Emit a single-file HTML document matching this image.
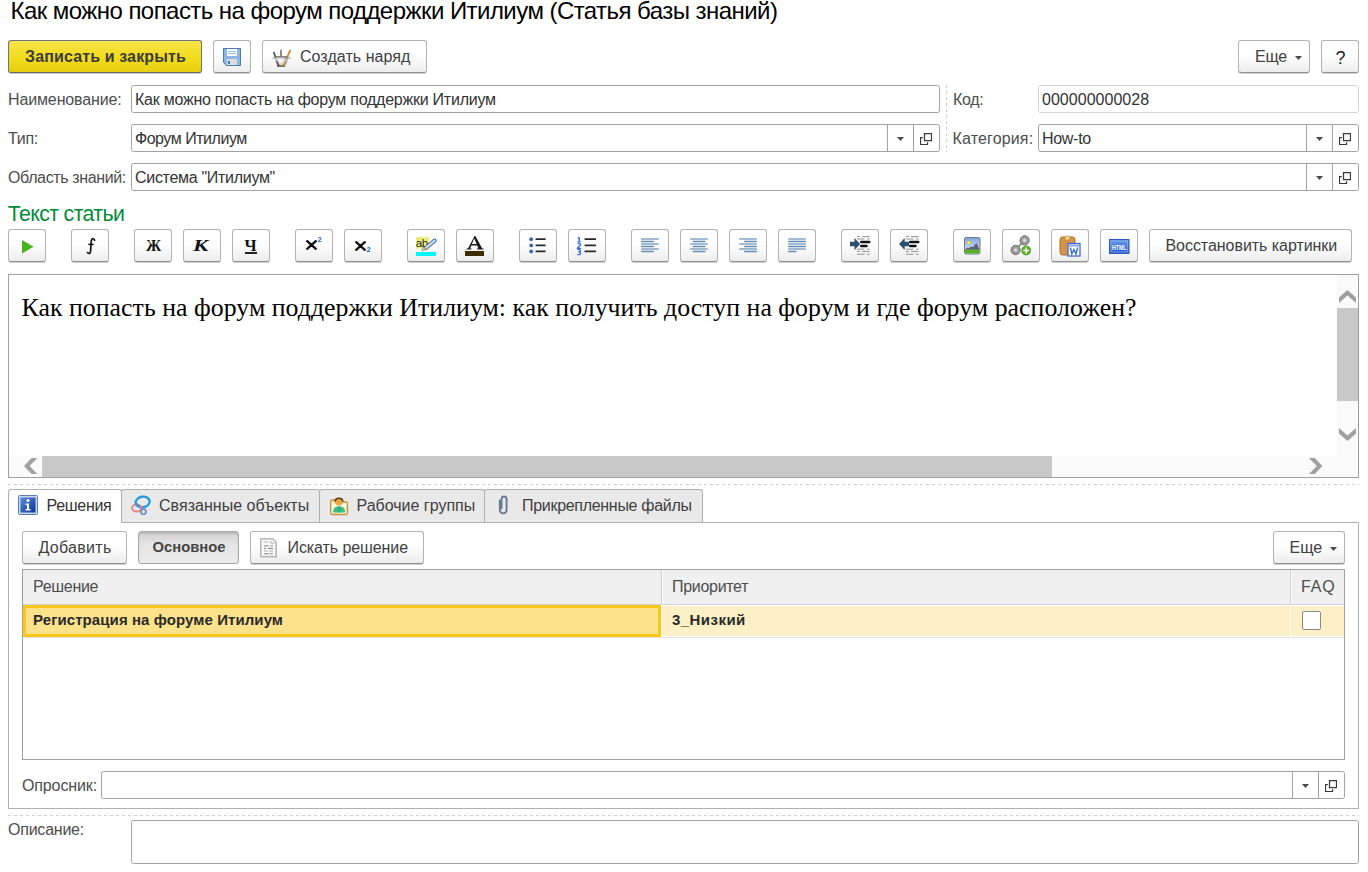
<!DOCTYPE html><html><head><meta charset="utf-8"><style>
html,body{margin:0;padding:0;background:#fff;width:1368px;height:872px;overflow:hidden;position:relative}
.a{position:absolute}
.t{position:absolute;line-height:1;white-space:pre;font-family:"Liberation Sans",sans-serif}
.btn{position:absolute;box-sizing:border-box;border:1px solid #b4b4b4;border-bottom-color:#909090;border-radius:3px;background:linear-gradient(#ffffff 0%,#fefefe 45%,#ededed 100%);box-shadow:0 1px 0 rgba(0,0,0,0.18)}
.inp{position:absolute;box-sizing:border-box;border:1px solid #a2a2a2;border-radius:2.5px;background:#fff}
</style></head><body>
<div class="t" style="left:10.5px;top:-1.32px;font-size:24px;color:#000;font-weight:normal;font-family:'Liberation Sans', sans-serif;letter-spacing:-0.55px;">Как можно попасть на форум поддержки Итилиум (Статья базы знаний)</div>
<div class="a" style="left:8px;top:40px;width:194px;height:33px;box-sizing:border-box;border:1px solid #72727e;border-bottom-color:#66666f;border-radius:3px;background:linear-gradient(#f7e44a,#f2dc1a 55%,#e6cf10);box-shadow:0 1px 0 rgba(0,0,0,0.2)"></div>
<div class="t" style="left:25px;top:48.96px;font-size:16px;color:#3c3c3c;font-weight:bold;font-family:'Liberation Sans', sans-serif;letter-spacing:0.13px;">Записать и закрыть</div>
<div class="btn" style="left:213px;top:40px;width:38px;height:33px;"></div>
<svg class="a" style="left:223px;top:48px" width="18" height="18" viewBox="0 0 18 18"><path d="M0.5 0.5H17.5V17.5H3.5L0.5 14.5Z" fill="#8db6e3" stroke="#4a79b3"/>
<rect x="4" y="1" width="10" height="7" fill="#fff"/>
<rect x="5" y="3" width="8" height="0.9" fill="#8db6e3"/><rect x="5" y="5" width="8" height="0.9" fill="#8db6e3"/>
<rect x="4" y="11" width="10" height="6" fill="#d9e0dc"/><rect x="5" y="13" width="2" height="3" fill="#4a79b3"/></svg>
<div class="btn" style="left:262px;top:40px;width:165px;height:33px;"></div>
<svg class="a" style="left:271px;top:47px" width="21" height="21" viewBox="0 0 21 21"><defs><radialGradient id="cup" cx="0.45" cy="0.4" r="0.6"><stop offset="0" stop-color="#ffffff"/><stop offset="0.6" stop-color="#d0d0d0"/><stop offset="1" stop-color="#8a8a8a"/></radialGradient><linearGradient id="pcl" x1="0" y1="0" x2="1" y2="0"><stop offset="0" stop-color="#f0b840"/><stop offset="1" stop-color="#c07810"/></linearGradient></defs><path d="M0.5 11.5L4 9.5L5 12Z M20.5 11.5L17 9.5L16 12Z" fill="#b8b8b8"/><path d="M10 1.5L11 4V9.5H9V4Z" fill="#8a8a8a"/><path d="M1.8 5.2L3.4 4.6L8.6 18.8L7 19.4Z" fill="#5a5a5a"/><path d="M18.6 2.4L20.2 3.2L13.2 19.4L11.4 18.8Z" fill="url(#pcl)"/><path d="M4.2 9.8H16.2C17.2 14.5 15.6 19 10.2 19.8C4.8 19 3.2 14.5 4.2 9.8Z" fill="url(#cup)"/><path d="M4.2 9.8H16.2" stroke="#6a6a6a" stroke-width="1.1"/><path d="M5.2 14L6.2 13.6L8.6 18.8L7 19.4Z" fill="#4a4a4a"/><path d="M14.6 13.6L15.6 14L13.2 19.4L11.4 18.8Z" fill="#c88a20"/><path d="M6 19.2H14" stroke="#3a3020" stroke-width="1.2" opacity="0.7"/></svg>
<div class="t" style="left:300px;top:49.46px;font-size:16px;color:#404040;font-weight:normal;font-family:'Liberation Sans', sans-serif;letter-spacing:0.05px;">Создать наряд</div>
<div class="btn" style="left:1238px;top:40px;width:72px;height:33px;"></div>
<div class="t" style="left:1255px;top:49.46px;font-size:16px;color:#404040;font-weight:normal;font-family:'Liberation Sans', sans-serif;letter-spacing:-0.15px;">Еще</div>
<svg class="a" style="left:1295px;top:56px" width="7" height="4" viewBox="0 0 7 4"><path d="M0 0H7L3.5 4Z" fill="#4a4a4a"/></svg>
<div class="btn" style="left:1321px;top:40px;width:38px;height:33px;"></div>
<div class="t" style="left:1335.5px;top:49.26px;font-size:18px;color:#1a1a1a;font-weight:normal;font-family:'Liberation Sans', sans-serif;letter-spacing:0px;">?</div>
<div class="t" style="left:8px;top:92.46px;font-size:16px;color:#4d4d4d;font-weight:normal;font-family:'Liberation Sans', sans-serif;letter-spacing:-0.13px;">Наименование:</div>
<div class="inp" style="left:131px;top:85px;width:809px;height:28px;border-color:#a2a2a2"></div>
<div class="t" style="left:135px;top:92.46px;font-size:16px;color:#333;font-weight:normal;font-family:'Liberation Sans', sans-serif;letter-spacing:-0.24px;">Как можно попасть на форум поддержки Итилиум</div>
<div class="t" style="left:8px;top:131.46px;font-size:16px;color:#4d4d4d;font-weight:normal;font-family:'Liberation Sans', sans-serif;letter-spacing:-0.3px;">Тип:</div>
<div class="inp" style="left:131px;top:124px;width:809px;height:28px;border-color:#a2a2a2"></div>
<div class="a" style="left:887px;top:125px;width:1px;height:26px;background:#a2a2a2"></div>
<div class="a" style="left:913px;top:125px;width:1px;height:26px;background:#a2a2a2"></div>
<svg class="a" style="left:897px;top:137px" width="7" height="4" viewBox="0 0 7 4"><path d="M0 0H7L3.5 4Z" fill="#4a4a4a"/></svg>
<svg class="a" style="left:920px;top:133px" width="12" height="12" viewBox="0 0 12 12"><path d="M4.5 0.5H11.5V7.5H4.5Z M2.8 4.5H0.5V11.5H7.5V9.2" fill="none" stroke="#3a3a3a" stroke-width="1.25"/></svg>
<div class="t" style="left:135px;top:131.46px;font-size:16px;color:#333;font-weight:normal;font-family:'Liberation Sans', sans-serif;letter-spacing:-0.47px;">Форум Итилиум</div>
<div class="t" style="left:8px;top:170.46px;font-size:16px;color:#4d4d4d;font-weight:normal;font-family:'Liberation Sans', sans-serif;letter-spacing:-0.37px;">Область знаний:</div>
<div class="inp" style="left:131px;top:163px;width:1228px;height:28px;border-color:#a2a2a2"></div>
<div class="a" style="left:1306px;top:164px;width:1px;height:26px;background:#a2a2a2"></div>
<div class="a" style="left:1332px;top:164px;width:1px;height:26px;background:#a2a2a2"></div>
<svg class="a" style="left:1316px;top:176px" width="7" height="4" viewBox="0 0 7 4"><path d="M0 0H7L3.5 4Z" fill="#4a4a4a"/></svg>
<svg class="a" style="left:1339px;top:172px" width="12" height="12" viewBox="0 0 12 12"><path d="M4.5 0.5H11.5V7.5H4.5Z M2.8 4.5H0.5V11.5H7.5V9.2" fill="none" stroke="#3a3a3a" stroke-width="1.25"/></svg>
<div class="t" style="left:135px;top:170.46px;font-size:16px;color:#333;font-weight:normal;font-family:'Liberation Sans', sans-serif;letter-spacing:-0.3px;">Система "Итилиум"</div>
<div class="a" style="left:946px;top:85px;width:1px;height:67px;background:repeating-linear-gradient(#cccccc 0 3px,transparent 3px 6px)"></div>
<div class="t" style="left:953px;top:92.46px;font-size:16px;color:#4d4d4d;font-weight:normal;font-family:'Liberation Sans', sans-serif;letter-spacing:-0.3px;">Код:</div>
<div class="inp" style="left:1038px;top:85px;width:321px;height:28px;border-color:#d4d4d4"></div>
<div class="t" style="left:1042px;top:92.46px;font-size:16px;color:#333;font-weight:normal;font-family:'Liberation Sans', sans-serif;letter-spacing:0.03px;">000000000028</div>
<div class="t" style="left:952.5px;top:131.46px;font-size:16px;color:#4d4d4d;font-weight:normal;font-family:'Liberation Sans', sans-serif;letter-spacing:0.15px;">Категория:</div>
<div class="inp" style="left:1038px;top:124px;width:321px;height:28px;border-color:#a2a2a2"></div>
<div class="a" style="left:1306px;top:125px;width:1px;height:26px;background:#a2a2a2"></div>
<div class="a" style="left:1332px;top:125px;width:1px;height:26px;background:#a2a2a2"></div>
<svg class="a" style="left:1316px;top:137px" width="7" height="4" viewBox="0 0 7 4"><path d="M0 0H7L3.5 4Z" fill="#4a4a4a"/></svg>
<svg class="a" style="left:1339px;top:133px" width="12" height="12" viewBox="0 0 12 12"><path d="M4.5 0.5H11.5V7.5H4.5Z M2.8 4.5H0.5V11.5H7.5V9.2" fill="none" stroke="#3a3a3a" stroke-width="1.25"/></svg>
<div class="t" style="left:1042px;top:131.46px;font-size:16px;color:#333;font-weight:normal;font-family:'Liberation Sans', sans-serif;letter-spacing:-0.3px;">How-to</div>
<div class="t" style="left:7.8px;top:203.97px;font-size:21.3px;color:#008c38;font-weight:normal;font-family:'Liberation Sans', sans-serif;letter-spacing:-0.62px;">Текст статьи</div>
<div class="btn" style="left:8px;top:229px;width:38px;height:33px;"></div>
<div class="btn" style="left:71px;top:229px;width:38px;height:33px;"></div>
<div class="btn" style="left:134px;top:229px;width:38px;height:33px;"></div>
<div class="btn" style="left:183px;top:229px;width:38px;height:33px;"></div>
<div class="btn" style="left:232px;top:229px;width:38px;height:33px;"></div>
<div class="btn" style="left:295px;top:229px;width:38px;height:33px;"></div>
<div class="btn" style="left:344px;top:229px;width:38px;height:33px;"></div>
<div class="btn" style="left:407px;top:229px;width:38px;height:33px;"></div>
<div class="btn" style="left:456px;top:229px;width:38px;height:33px;"></div>
<div class="btn" style="left:519px;top:229px;width:38px;height:33px;"></div>
<div class="btn" style="left:568px;top:229px;width:38px;height:33px;"></div>
<div class="btn" style="left:631px;top:229px;width:38px;height:33px;"></div>
<div class="btn" style="left:680px;top:229px;width:38px;height:33px;"></div>
<div class="btn" style="left:729px;top:229px;width:38px;height:33px;"></div>
<div class="btn" style="left:778px;top:229px;width:38px;height:33px;"></div>
<div class="btn" style="left:841px;top:229px;width:38px;height:33px;"></div>
<div class="btn" style="left:890px;top:229px;width:38px;height:33px;"></div>
<div class="btn" style="left:953px;top:229px;width:38px;height:33px;"></div>
<div class="btn" style="left:1002px;top:229px;width:38px;height:33px;"></div>
<div class="btn" style="left:1051px;top:229px;width:38px;height:33px;"></div>
<div class="btn" style="left:1100px;top:229px;width:38px;height:33px;"></div>
<div class="btn" style="left:1149px;top:229px;width:203px;height:33px;"></div>
<div class="t" style="left:1165.5px;top:238.46px;font-size:16px;color:#404040;font-weight:normal;font-family:'Liberation Sans', sans-serif;letter-spacing:-0.05px;">Восстановить картинки</div>
<div class="a" style="left:8px;top:274px;width:1351px;height:204px;box-sizing:border-box;border:1px solid #a0a0a0;background:#fff"></div>
<div class="t" style="left:21.5px;top:295.39px;font-size:25.8px;color:#000;font-weight:normal;font-family:'Liberation Serif', serif;letter-spacing:0.04px;">Как попасть на форум поддержки Итилиум: как получить доступ на форум и где форум расположен?</div>
<div class="a" style="left:1337px;top:275px;width:21px;height:181px;background:#fafafa"></div>
<div class="a" style="left:1337px;top:308px;width:21px;height:93px;background:#c8c8c8"></div>
<svg class="a" style="left:1339px;top:290px" width="17" height="13" viewBox="0 0 17 13"><path d="M0 7.6L8.5 0L17 7.6V13L8.5 5.4L0 13Z" fill="#a0a0a0"/></svg>
<svg class="a" style="left:1339px;top:428px" width="17" height="13" viewBox="0 0 17 13"><path d="M0 0L8.5 7.6L17 0V5.4L8.5 13L0 5.4Z" fill="#a0a0a0"/></svg>
<div class="a" style="left:9px;top:456px;width:1349px;height:21px;background:#fafafa"></div>
<div class="a" style="left:42px;top:456px;width:1010px;height:21px;background:#c8c8c8"></div>
<svg class="a" style="left:24px;top:458px" width="14" height="16" viewBox="0 0 14 16"><path d="M7.6 0H13.4L5.6 8L13.4 16H7.6L0 8Z" fill="#a0a0a0"/></svg>
<svg class="a" style="left:1309px;top:458px" width="14" height="16" viewBox="0 0 14 16"><path d="M5.8 0H0L7.8 8L0 16H5.8L13.4 8Z" fill="#a0a0a0"/></svg>
<div class="a" style="left:8px;top:484px;width:1351px;height:1px;background:repeating-linear-gradient(90deg,#d0d0d0 0 3px,transparent 3px 6px)"></div>
<div class="a" style="left:8px;top:522px;width:1351px;height:1px;background:#b0b0b0"></div>
<div class="a" style="left:121px;top:489px;width:199px;height:33px;box-sizing:border-box;border:1px solid #b0b0b0;border-bottom:none;border-radius:3px 3px 0 0;background:#e9e9e9"></div>
<div class="a" style="left:319px;top:489px;width:166px;height:33px;box-sizing:border-box;border:1px solid #b0b0b0;border-bottom:none;border-radius:3px 3px 0 0;background:#e9e9e9"></div>
<div class="a" style="left:484px;top:489px;width:219px;height:33px;box-sizing:border-box;border:1px solid #b0b0b0;border-bottom:none;border-radius:3px 3px 0 0;background:#e9e9e9"></div>
<div class="a" style="left:8px;top:489px;width:114px;height:34px;box-sizing:border-box;border:1px solid #b0b0b0;border-bottom:none;border-radius:3px 3px 0 0;background:#fff"></div>
<div class="a" style="left:8px;top:522px;width:1351px;height:287px;box-sizing:border-box;border:1px solid #b0b0b0;border-top:none"></div>
<div class="a" style="left:9px;top:522px;width:112px;height:2px;background:#fff"></div>
<svg class="a" style="left:18px;top:495px" width="20" height="20" viewBox="0 0 20 20"><defs><linearGradient id="ig" x1="0" y1="0" x2="1" y2="1"><stop offset="0" stop-color="#5a8ad8"/><stop offset="1" stop-color="#0a3596"/></linearGradient></defs><rect x="0.5" y="0.5" width="19" height="19" rx="1" fill="#c8d6ea" stroke="#5a7fb8"/><rect x="2.5" y="2.5" width="15" height="15" fill="url(#ig)"/><circle cx="10" cy="5.5" r="1.6" fill="#fff"/><path d="M7.5 8.5H11V14H12.5V15.5H7.5V14H9V10H7.5Z" fill="#fff"/></svg>
<div class="t" style="left:46.5px;top:498.46px;font-size:16px;color:#333;font-weight:normal;font-family:'Liberation Sans', sans-serif;letter-spacing:-0.3px;">Решения</div>
<svg class="a" style="left:126px;top:490px" width="30" height="30" viewBox="0 0 30 30"><ellipse cx="10.7" cy="17.9" rx="4.7" ry="3.6" fill="none" stroke="#f27c7c" stroke-width="1.8"/><ellipse cx="16.7" cy="12" rx="7" ry="5.3" transform="rotate(-8 16.7 12)" fill="none" stroke="#2a9ae0" stroke-width="2.4"/><path d="M14.2 15.6A4.7 3.6 0 0 1 14.8 19" fill="none" stroke="#f27c7c" stroke-width="1.8"/><circle cx="17.4" cy="21.8" r="2.6" fill="#c8f0b8" stroke="#5a7acc" stroke-width="1.3"/></svg>
<div class="t" style="left:159px;top:498.46px;font-size:16px;color:#404040;font-weight:normal;font-family:'Liberation Sans', sans-serif;letter-spacing:0.03px;">Связанные объекты</div>
<svg class="a" style="left:324px;top:490px" width="30" height="30" viewBox="0 0 30 30"><path d="M6.6 11.2Q6.6 10 8 10H10.5L11.5 12H22Q23.5 12 23.5 13.5V23Q23.5 24.5 22 24.5H8Q6.6 24.5 6.6 23Z" fill="#f6e6a8" stroke="#c09448" stroke-width="1.3"/><rect x="8.2" y="13.2" width="13.8" height="10" fill="#fffbe2"/><path d="M9 22.6C9 18 11 16.2 15 16.2C19 16.2 21.2 18 21.2 22.6Z" fill="#3cbf86"/><path d="M15 16.2V22.6" stroke="#1e9a60" stroke-width="0.8"/><circle cx="15" cy="11.6" r="3.9" fill="#e9a443"/><path d="M11.2 11.6C11.2 7 18.8 7 18.8 11.6" fill="none" stroke="#5a3a18" stroke-width="1.5"/></svg>
<div class="t" style="left:356.5px;top:498.46px;font-size:16px;color:#404040;font-weight:normal;font-family:'Liberation Sans', sans-serif;letter-spacing:0.0px;">Рабочие группы</div>
<svg class="a" style="left:498px;top:495px" width="11" height="20" viewBox="0 0 11 20"><path d="M1.8 5.5V15A3.4 3.4 0 0 0 8.6 15V4A2.5 2.5 0 0 0 3.6 4V13.2" fill="none" stroke="#667a94" stroke-width="1.9" stroke-linecap="round"/></svg>
<div class="t" style="left:522px;top:498.46px;font-size:16px;color:#404040;font-weight:normal;font-family:'Liberation Sans', sans-serif;letter-spacing:-0.3px;">Прикрепленные файлы</div>
<div class="btn" style="left:22px;top:531px;width:105px;height:33px;"></div>
<div class="t" style="left:38.5px;top:540.46px;font-size:16px;color:#404040;font-weight:normal;font-family:'Liberation Sans', sans-serif;letter-spacing:0.3px;">Добавить</div>
<div class="a" style="left:138px;top:531px;width:101px;height:33px;box-sizing:border-box;border:1px solid #a8a8a8;border-radius:3px;background:linear-gradient(#d0d0d0,#e4e4e4 40%,#ececec);box-shadow:inset 0 2px 2px rgba(0,0,0,0.12)"></div>
<div class="t" style="left:152.5px;top:539.97px;font-size:14.8px;color:#454545;font-weight:bold;font-family:'Liberation Sans', sans-serif;letter-spacing:0px;">Основное</div>
<div class="btn" style="left:250px;top:531px;width:174px;height:33px;"></div>
<svg class="a" style="left:255px;top:533px" width="30" height="30" viewBox="0 0 30 30"><path d="M5.8 5.8H17.6L21.2 9.4V23.6H5.8Z" fill="#fff" stroke="#b6b6b6" stroke-width="1.6"/><path d="M15.8 7.5V10.2H19.4" fill="none" stroke="#b0b0b0" stroke-width="1"/><rect x="8.3" y="7.6" width="5.5" height="2.6" fill="#d6dbe2"/><rect x="8.8" y="12.2" width="5" height="1.3" fill="#9a9a9a"/><rect x="15" y="12.2" width="3" height="1.3" fill="#aaa"/><rect x="8.8" y="14.8" width="2" height="1.3" fill="#888"/><rect x="13" y="14.8" width="5" height="1.3" fill="#888"/><rect x="8.8" y="17.4" width="4" height="1.3" fill="#bbb"/><rect x="14" y="17.4" width="4" height="1.3" fill="#bbb"/><rect x="8.8" y="20" width="5" height="1.3" fill="#999"/><rect x="15" y="20" width="2.8" height="1.3" fill="#999"/></svg>
<div class="t" style="left:287.5px;top:540.46px;font-size:16px;color:#404040;font-weight:normal;font-family:'Liberation Sans', sans-serif;letter-spacing:-0.09px;">Искать решение</div>
<div class="btn" style="left:1273px;top:531px;width:72px;height:33px;"></div>
<div class="t" style="left:1289.5px;top:540.46px;font-size:16px;color:#404040;font-weight:normal;font-family:'Liberation Sans', sans-serif;letter-spacing:0px;">Еще</div>
<svg class="a" style="left:1330px;top:547px" width="7" height="4" viewBox="0 0 7 4"><path d="M0 0H7L3.5 4Z" fill="#4a4a4a"/></svg>
<div class="a" style="left:22px;top:569px;width:1323px;height:191px;box-sizing:border-box;border:1px solid #a0a0a0;background:#fff"></div>
<div class="a" style="left:23px;top:570px;width:1321px;height:34px;background:#f0f0f0"></div>
<div class="a" style="left:661px;top:570px;width:1px;height:34px;background:#cfcfcf"></div>
<div class="a" style="left:662px;top:570px;width:1px;height:34px;background:#ffffff"></div>
<div class="a" style="left:1290px;top:570px;width:1px;height:34px;background:#cfcfcf"></div>
<div class="a" style="left:1291px;top:570px;width:1px;height:34px;background:#ffffff"></div>
<div class="a" style="left:23px;top:604px;width:1321px;height:1px;background:#d2d2d6"></div>
<div class="t" style="left:33px;top:578.96px;font-size:16px;color:#4d4d4d;font-weight:normal;font-family:'Liberation Sans', sans-serif;letter-spacing:-0.3px;">Решение</div>
<div class="t" style="left:672px;top:578.96px;font-size:16px;color:#4d4d4d;font-weight:normal;font-family:'Liberation Sans', sans-serif;letter-spacing:-0.3px;">Приоритет</div>
<div class="t" style="left:1301px;top:578.96px;font-size:16px;color:#4d4d4d;font-weight:normal;font-family:'Liberation Sans', sans-serif;letter-spacing:0.8px;">FAQ</div>
<div class="a" style="left:662px;top:606px;width:682px;height:30px;background:#fdf0c6"></div>
<div class="a" style="left:1290px;top:605px;width:1px;height:32px;background:#fff"></div>
<div class="a" style="left:23px;top:605px;width:638px;height:32px;box-sizing:border-box;border:3px solid #f9c818;background:#fde28c"></div>
<div class="a" style="left:23px;top:637px;width:1321px;height:1px;background:#e2e2e2"></div>
<div class="t" style="left:33px;top:611.80px;font-size:15px;color:#2a2a2a;font-weight:bold;font-family:'Liberation Sans', sans-serif;letter-spacing:0.08px;">Регистрация на форуме Итилиум</div>
<div class="t" style="left:672px;top:611.80px;font-size:15px;color:#2a2a2a;font-weight:bold;font-family:'Liberation Sans', sans-serif;letter-spacing:0.45px;">3_Низкий</div>
<div class="a" style="left:1302px;top:611px;width:19px;height:19px;box-sizing:border-box;border:1px solid #8a8a8a;border-radius:2px;background:#fff"></div>
<div class="t" style="left:22px;top:778.46px;font-size:16px;color:#4d4d4d;font-weight:normal;font-family:'Liberation Sans', sans-serif;letter-spacing:-0.13px;">Опросник:</div>
<div class="inp" style="left:101px;top:771px;width:1244px;height:28px;border-color:#a2a2a2"></div>
<div class="a" style="left:1292px;top:772px;width:1px;height:26px;background:#a2a2a2"></div>
<div class="a" style="left:1318px;top:772px;width:1px;height:26px;background:#a2a2a2"></div>
<svg class="a" style="left:1302px;top:784px" width="7" height="4" viewBox="0 0 7 4"><path d="M0 0H7L3.5 4Z" fill="#4a4a4a"/></svg>
<svg class="a" style="left:1325px;top:780px" width="12" height="12" viewBox="0 0 12 12"><path d="M4.5 0.5H11.5V7.5H4.5Z M2.8 4.5H0.5V11.5H7.5V9.2" fill="none" stroke="#3a3a3a" stroke-width="1.25"/></svg>
<div class="a" style="left:8px;top:815px;width:1351px;height:1px;background:repeating-linear-gradient(90deg,#d0d0d0 0 3px,transparent 3px 6px)"></div>
<div class="t" style="left:8px;top:822.46px;font-size:16px;color:#4d4d4d;font-weight:normal;font-family:'Liberation Sans', sans-serif;letter-spacing:-0.23px;">Описание:</div>
<div class="inp" style="left:131px;top:820px;width:1228px;height:44px;border-color:#a2a2a2"></div>
<svg class="a" style="left:22px;top:240px" width="12" height="14" viewBox="0 0 12 14"><path d="M0 0V13.5L11.5 6.75Z" fill="#46b41c"/></svg>
<svg class="a" style="left:86px;top:237px" width="10" height="18" viewBox="0 0 10 18"><path d="M8.6 3.2C8.2 1.6 6.6 1.2 5.8 2.4C5.2 3.3 5.1 5 5 7L4.6 14C4.5 16.2 3.3 17 1.5 15.6" fill="none" stroke="#111" stroke-width="1.7" stroke-linecap="round"/><path d="M2.3 7.4H7.6" stroke="#111" stroke-width="1.5"/></svg>
<div class="t" style="left:145.5px;top:238.18px;font-size:16.5px;color:#111;font-weight:bold;font-family:'Liberation Serif', serif;letter-spacing:0px;transform:scaleX(0.93);transform-origin:0 0">Ж</div>
<div class="t" style="left:193px;top:238.18px;font-size:16.5px;color:#111;font-weight:bold;font-family:'Liberation Serif', serif;letter-spacing:0px;font-style:italic;transform:scaleX(1.38);transform-origin:0 0">К</div>
<div class="t" style="left:244.5px;top:238.18px;font-size:16.5px;color:#111;font-weight:bold;font-family:'Liberation Serif', serif;letter-spacing:0px;">Ч</div>
<div class="a" style="left:245px;top:252px;width:12px;height:2px;background:#222"></div>
<svg class="a" style="left:306px;top:240px" width="11" height="10" viewBox="0 0 11 10"><path d="M1.2 1.2L9.8 8.8M9.8 1.2L1.2 8.8" stroke="#111" stroke-width="2.3" stroke-linecap="round"/></svg>
<div class="t" style="left:317.5px;top:235.65px;font-size:7.5px;color:#2a62d6;font-weight:bold;font-family:'Liberation Sans', sans-serif;letter-spacing:0px;">2</div>
<svg class="a" style="left:355px;top:241px" width="11" height="10" viewBox="0 0 11 10"><path d="M1.2 1.2L9.8 8.8M9.8 1.2L1.2 8.8" stroke="#111" stroke-width="2.3" stroke-linecap="round"/></svg>
<div class="t" style="left:366.5px;top:245.95px;font-size:7.5px;color:#2a62d6;font-weight:bold;font-family:'Liberation Sans', sans-serif;letter-spacing:0px;">2</div>
<svg class="a" style="left:415px;top:236px" width="22" height="21" viewBox="0 0 22 21"><rect x="1" y="1" width="13" height="11.5" fill="#ecec78"/><text x="0.8" y="10.6" font-family="Liberation Sans" font-size="11.5" letter-spacing="-0.4" fill="#262626">ab</text><path d="M10.6 12.2L19.6 4.6" stroke="#4a6aa2" stroke-width="4" stroke-linecap="round"/><path d="M10.6 12.2L19.6 4.6" stroke="#c8d8f0" stroke-width="2.2" stroke-linecap="round"/><path d="M6.8 14.6L8.2 11.2L11.6 13.4Z" fill="#e6d49a" stroke="#7a6a40" stroke-width="0.6"/><rect x="1" y="16" width="20" height="4" fill="#00f8ff"/></svg>
<svg class="a" style="left:465px;top:235px" width="20" height="22" viewBox="0 0 20 22"><path d="M1.5 14.5H6.5V13.5H5.2L6.3 10.5H12.2L13.4 13.5H12V14.5H18.5V13.5H17.2L10.4 1H9.6L3 13.5H1.5Z M6.9 9L9.2 3.6L11.6 9Z" fill="#1a1a1a"/><rect x="0" y="16" width="19" height="5" fill="#3f2c00"/></svg>
<svg class="a" style="left:528px;top:236px" width="20" height="18" viewBox="0 0 20 18"><circle cx="3.2" cy="3.2" r="1.9" fill="#3a66b0"/><circle cx="3.2" cy="9.4" r="1.9" fill="#3a66b0"/><circle cx="3.2" cy="15.4" r="1.9" fill="#3a66b0"/><path d="M7.6 3.2H17.6M7.6 9.4H17.6M7.6 15.4H17.6" stroke="#2a2a2a" stroke-width="1.7"/></svg>
<svg class="a" style="left:576px;top:236px" width="22" height="20" viewBox="0 0 22 20"><path d="M3.2 1.3V5.8M2 2.6L3.2 1.3M1.6 5.8H4.8M1.4 8.2C2 7.3 4.6 7.2 4.6 8.8C4.6 10 1.4 11.2 1.4 12.3H4.9M1.4 13.8C2.5 13.2 4.7 13.5 4.4 15C4.2 15.7 3.3 15.9 2.6 16C3.4 16 4.8 16.4 4.6 17.6C4.4 18.8 2.2 18.8 1.3 18.2" fill="none" stroke="#3a6ad8" stroke-width="1.3"/><path d="M8.6 3.2H20M8.6 9.4H20M8.6 15.4H20" stroke="#2a2a2a" stroke-width="1.7"/></svg>
<svg class="a" style="left:641px;top:235px" width="20" height="20" viewBox="0 0 20 20"><rect x="0" y="3.30" width="18" height="1.5" rx="0.7" fill="#5b88b2" opacity="0.75"/><rect x="0" y="5.80" width="13" height="1.5" rx="0.7" fill="#5b88b2" opacity="0.95"/><rect x="0" y="8.30" width="18" height="1.5" rx="0.7" fill="#5b88b2" opacity="0.75"/><rect x="0" y="10.80" width="13" height="1.5" rx="0.7" fill="#5b88b2" opacity="0.95"/><rect x="0" y="13.30" width="18" height="1.5" rx="0.7" fill="#5b88b2" opacity="0.75"/><rect x="0" y="15.80" width="13" height="1.5" rx="0.7" fill="#5b88b2" opacity="0.95"/></svg>
<svg class="a" style="left:690px;top:235px" width="20" height="20" viewBox="0 0 20 20"><rect x="0" y="3.30" width="18" height="1.5" rx="0.7" fill="#5b88b2" opacity="0.75"/><rect x="2.6" y="5.80" width="13" height="1.5" rx="0.7" fill="#5b88b2" opacity="0.95"/><rect x="0" y="8.30" width="18" height="1.5" rx="0.7" fill="#5b88b2" opacity="0.75"/><rect x="2.6" y="10.80" width="13" height="1.5" rx="0.7" fill="#5b88b2" opacity="0.95"/><rect x="0" y="13.30" width="18" height="1.5" rx="0.7" fill="#5b88b2" opacity="0.75"/><rect x="2.6" y="15.80" width="13" height="1.5" rx="0.7" fill="#5b88b2" opacity="0.95"/></svg>
<svg class="a" style="left:739px;top:235px" width="20" height="20" viewBox="0 0 20 20"><rect x="0" y="3.30" width="18" height="1.5" rx="0.7" fill="#5b88b2" opacity="0.75"/><rect x="5" y="5.80" width="13" height="1.5" rx="0.7" fill="#5b88b2" opacity="0.95"/><rect x="0" y="8.30" width="18" height="1.5" rx="0.7" fill="#5b88b2" opacity="0.75"/><rect x="5" y="10.80" width="13" height="1.5" rx="0.7" fill="#5b88b2" opacity="0.95"/><rect x="0" y="13.30" width="18" height="1.5" rx="0.7" fill="#5b88b2" opacity="0.75"/><rect x="5" y="15.80" width="13" height="1.5" rx="0.7" fill="#5b88b2" opacity="0.95"/></svg>
<svg class="a" style="left:788px;top:235px" width="20" height="20" viewBox="0 0 20 20"><rect x="0" y="3.30" width="18" height="1.5" rx="0.7" fill="#5b88b2" opacity="0.75"/><rect x="0" y="5.80" width="18" height="1.5" rx="0.7" fill="#5b88b2" opacity="0.95"/><rect x="0" y="8.30" width="18" height="1.5" rx="0.7" fill="#5b88b2" opacity="0.75"/><rect x="0" y="10.80" width="18" height="1.5" rx="0.7" fill="#5b88b2" opacity="0.95"/><rect x="0" y="13.30" width="18" height="1.5" rx="0.7" fill="#5b88b2" opacity="0.75"/><rect x="0" y="15.80" width="8.6" height="1.5" rx="0.7" fill="#5b88b2" opacity="0.95"/></svg>
<svg class="a" style="left:857px;top:235px" width="14" height="21" viewBox="0 0 14 21"><path d="M0 1.6H3" stroke="#9a9a9a" stroke-width="1.1"/><path d="M5 1.6H12.6" stroke="#9a9a9a" stroke-width="1.1"/><path d="M0 4H7.5" stroke="#9a9a9a" stroke-width="1.1"/><path d="M10 4H12.6" stroke="#9a9a9a" stroke-width="1.1"/><path d="M0 14.2H7.5" stroke="#9a9a9a" stroke-width="1.1"/><path d="M10 14.2H12.6" stroke="#9a9a9a" stroke-width="1.1"/><path d="M0 16.5H3" stroke="#9a9a9a" stroke-width="1.1"/><path d="M5 16.5H12.6" stroke="#9a9a9a" stroke-width="1.1"/><path d="M0 19.3H7.5" stroke="#9a9a9a" stroke-width="1.1"/><path d="M10 19.3H12.6" stroke="#9a9a9a" stroke-width="1.1"/><path d="M4.2 7H12.3M4.2 11H9.5" stroke="#111" stroke-width="2.4" stroke-linecap="round"/></svg>
<svg class="a" style="left:850px;top:238px" width="11" height="12" viewBox="0 0 11 12"><path d="M0 3.8H4.5V0L10.2 6L4.5 12V8.2H0Z" fill="#2c5070"/></svg>
<svg class="a" style="left:906px;top:235px" width="14" height="21" viewBox="0 0 14 21"><path d="M0 1.6H3" stroke="#9a9a9a" stroke-width="1.1"/><path d="M5 1.6H12.6" stroke="#9a9a9a" stroke-width="1.1"/><path d="M0 4H7.5" stroke="#9a9a9a" stroke-width="1.1"/><path d="M10 4H12.6" stroke="#9a9a9a" stroke-width="1.1"/><path d="M0 14.2H7.5" stroke="#9a9a9a" stroke-width="1.1"/><path d="M10 14.2H12.6" stroke="#9a9a9a" stroke-width="1.1"/><path d="M0 16.5H3" stroke="#9a9a9a" stroke-width="1.1"/><path d="M5 16.5H12.6" stroke="#9a9a9a" stroke-width="1.1"/><path d="M0 19.3H7.5" stroke="#9a9a9a" stroke-width="1.1"/><path d="M10 19.3H12.6" stroke="#9a9a9a" stroke-width="1.1"/><path d="M4.2 7H12.3M4.2 11H9.5" stroke="#111" stroke-width="2.4" stroke-linecap="round"/></svg>
<svg class="a" style="left:898.5px;top:238px" width="11" height="12" viewBox="0 0 11 12"><path d="M10.2 3.8H5.7V0L0 6L5.7 12V8.2H10.2Z" fill="#2c5070"/></svg>
<svg class="a" style="left:964px;top:237px" width="17" height="18" viewBox="0 0 17 18"><defs><linearGradient id="sky" x1="0" y1="0" x2="0" y2="1"><stop offset="0" stop-color="#7ea4d8"/><stop offset="1" stop-color="#eef6ff"/></linearGradient></defs><rect x="0.5" y="0.5" width="15.5" height="16.5" rx="1.5" fill="url(#sky)" stroke="#6a7a98"/><circle cx="5" cy="5.5" r="1.5" fill="#f4f000"/><path d="M1 13L3 10.5L5 11L7 9.5L9 10L11 7.5L12.5 6L14 9L15.5 12V13Z" fill="#626080"/><rect x="1" y="12.5" width="14.5" height="4" fill="#5cb020"/></svg>
<svg class="a" style="left:1010px;top:234px" width="22" height="22" viewBox="0 0 22 22"><circle cx="14.6" cy="6.4" r="4.6" fill="#9a9a9a" stroke="#6e6e6e" stroke-width="1"/><circle cx="5.6" cy="16" r="4.6" fill="#9a9a9a" stroke="#6e6e6e" stroke-width="1"/><path d="M8 13L12 9" stroke="#777" stroke-width="1.6"/><circle cx="14.6" cy="6.4" r="1.8" fill="#d8d8d8"/><circle cx="5.6" cy="16" r="1.8" fill="#d8d8d8"/><circle cx="16.2" cy="16.5" r="4.5" fill="#58b01c" stroke="#3a8a10" stroke-width="0.6"/><path d="M16.2 13.6V19.4M13.3 16.5H19.1" stroke="#fff" stroke-width="1.6"/></svg>
<svg class="a" style="left:1059px;top:235px" width="22" height="22" viewBox="0 0 22 22"><rect x="1" y="2" width="15" height="18" rx="2.5" fill="#d4954a" stroke="#b06e2a" stroke-width="1"/><rect x="6" y="1" width="5" height="4" rx="1" fill="#f0d890" stroke="#b08030" stroke-width="0.6"/><rect x="9" y="8.5" width="12" height="12.5" fill="#fff" stroke="#3d6ad6" stroke-width="1.3"/><rect x="10" y="9.5" width="10" height="2" fill="#8aa8e8"/><path d="M11.4 12.5L12.8 19L14.9 14.5L17 19L18.6 12.5" fill="none" stroke="#3d6ad6" stroke-width="1.4"/></svg>
<svg class="a" style="left:1109px;top:239px" width="21" height="16" viewBox="0 0 21 16"><defs><linearGradient id="hg" x1="0" y1="0" x2="0" y2="1"><stop offset="0" stop-color="#6a9ce8"/><stop offset="1" stop-color="#2a58d0"/></linearGradient></defs><rect x="0.5" y="0.5" width="19.5" height="14" fill="url(#hg)" stroke="#2c58c8"/><rect x="2" y="2" width="16.5" height="11" fill="none" stroke="#9cc0f4" stroke-width="0.8" opacity="0.7"/><text x="3" y="11" font-family="Liberation Sans" font-weight="bold" font-size="8" textLength="14.5" lengthAdjust="spacingAndGlyphs" fill="#fff">HTML</text></svg>
</body></html>
